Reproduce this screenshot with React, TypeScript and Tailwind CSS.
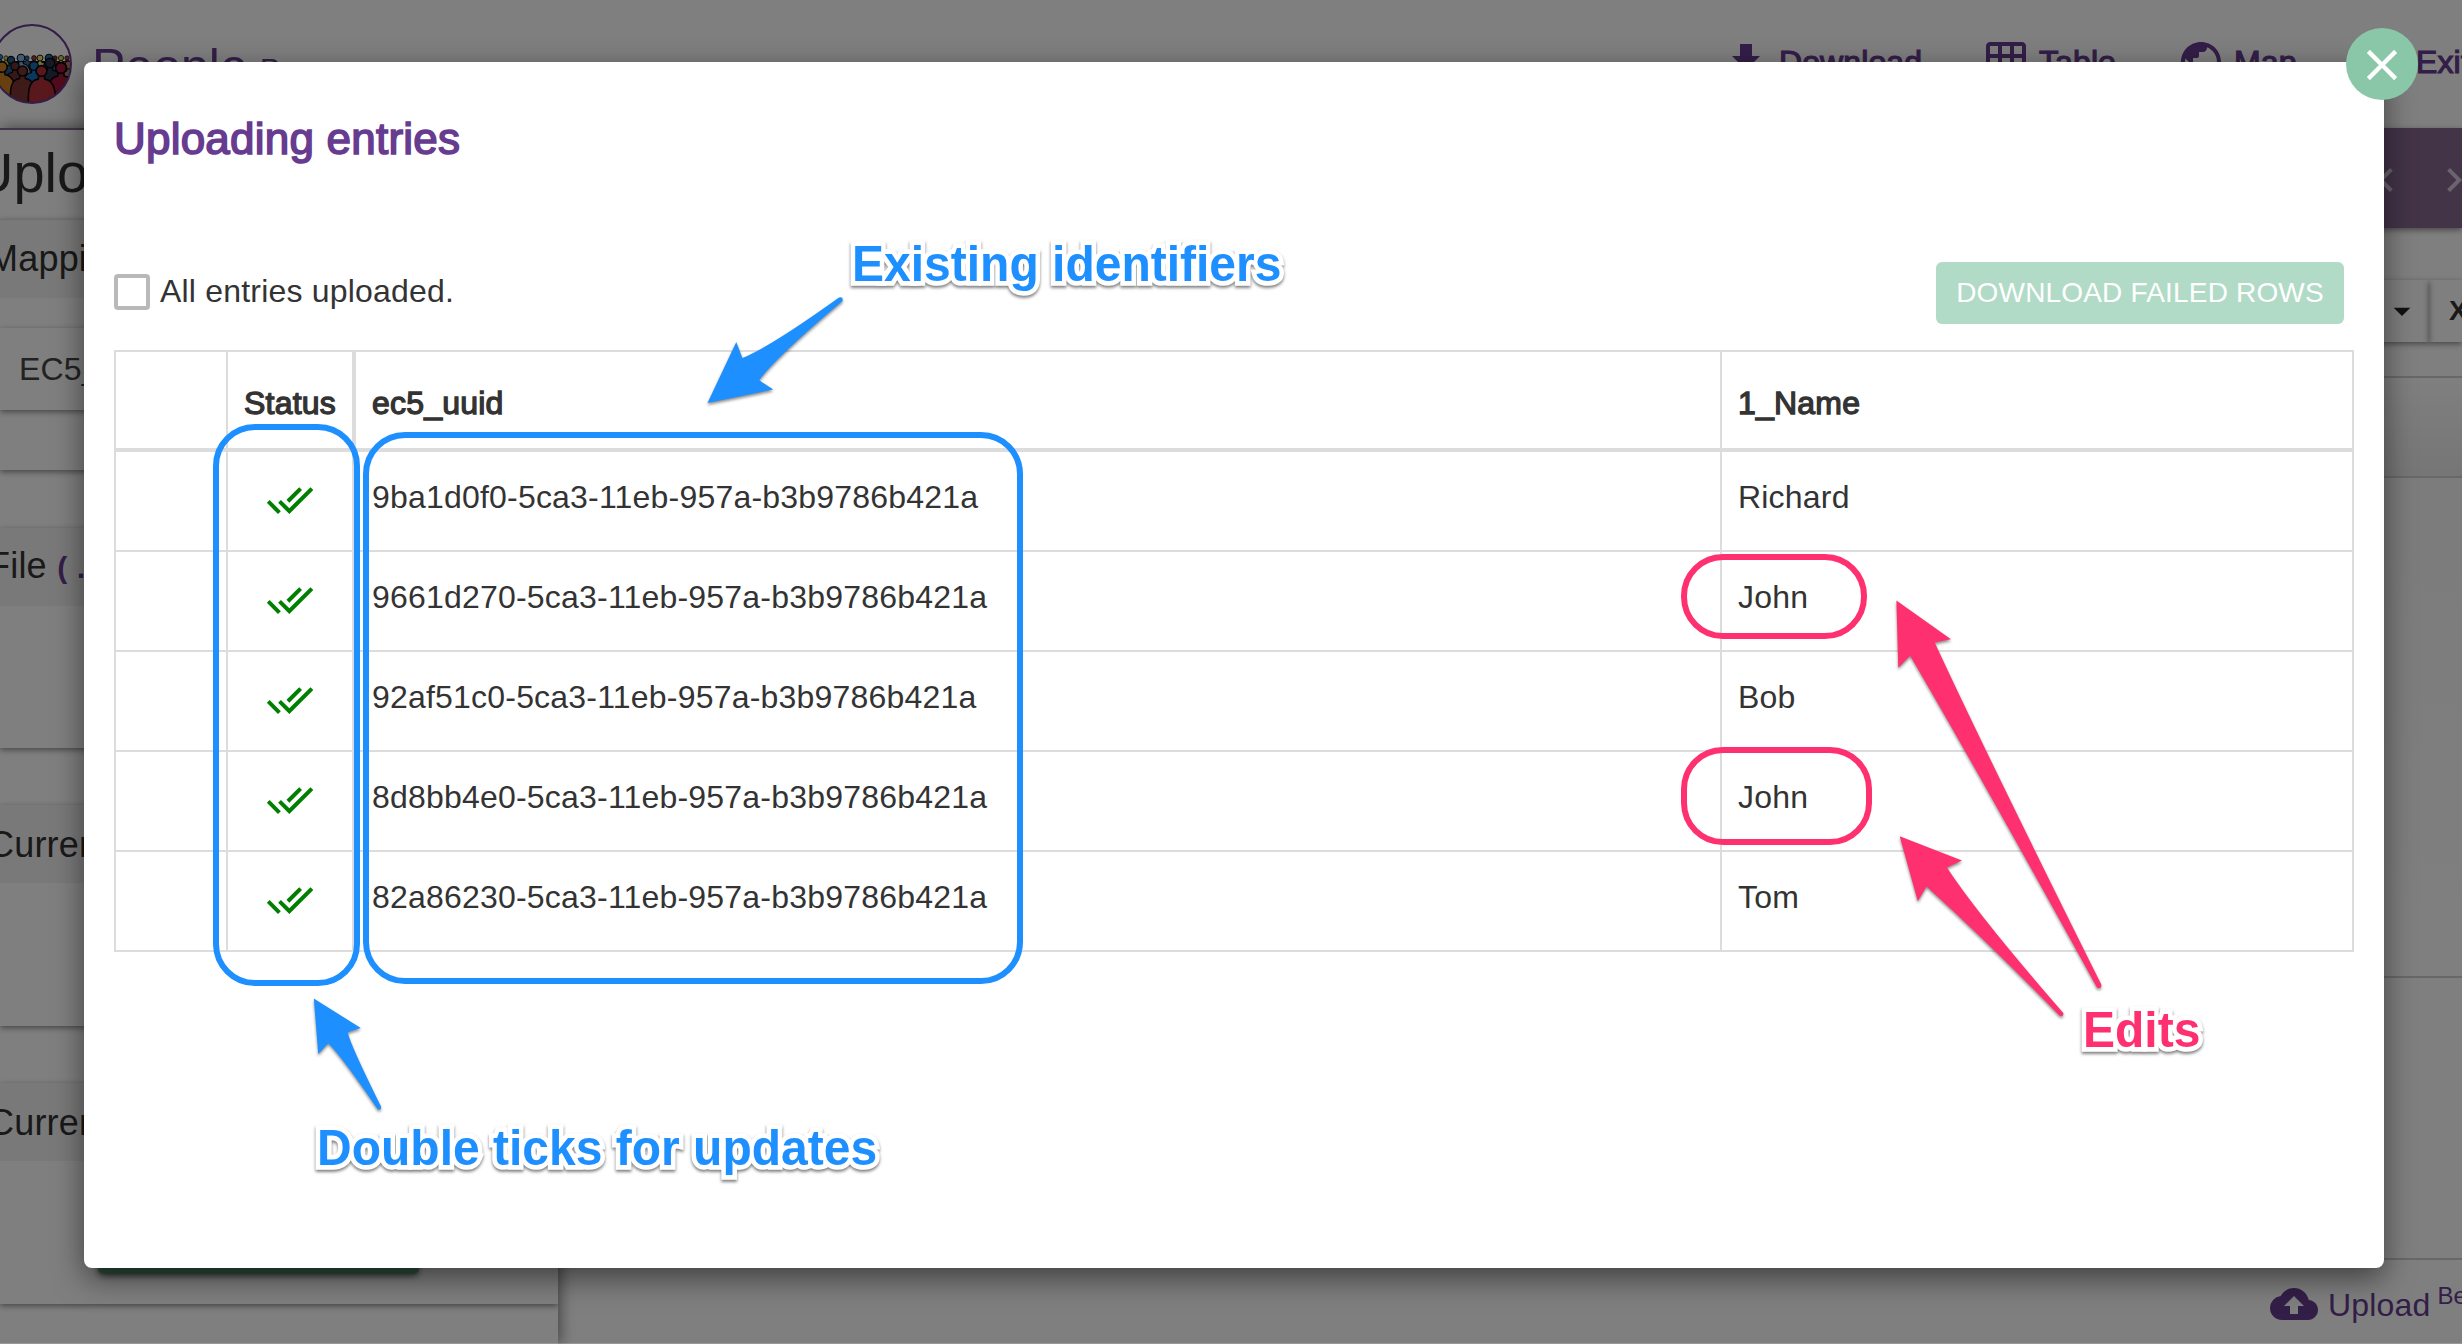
import React from "react";
import {
  MdArrowDropDown,
  MdChevronLeft,
  MdChevronRight,
  MdClose,
  MdCloudUpload,
  MdDoneAll,
  MdGridOn,
  MdPublic,
} from "react-icons/md";

const rows = [
  { uuid: "9ba1d0f0-5ca3-11eb-957a-b3b9786b421a", name: "Richard" },
  { uuid: "9661d270-5ca3-11eb-957a-b3b9786b421a", name: "John" },
  { uuid: "92af51c0-5ca3-11eb-957a-b3b9786b421a", name: "Bob" },
  { uuid: "8d8bb4e0-5ca3-11eb-957a-b3b9786b421a", name: "John" },
  { uuid: "82a86230-5ca3-11eb-957a-b3b9786b421a", name: "Tom" },
];

function Person({ x, y, r, fill }: { x: number; y: number; r: number; fill: string }) {
  return (
    <g transform={`translate(${x} ${y}) scale(${r / 5})`} fill={fill} stroke="#0a0608" strokeWidth="1.5">
      <path d="M-12 34 C-13 16 -11 8.5 -3 7.5 L-2.5 4 H2.5 L3 7.5 C11 8.5 13 16 14 34 Z" />
      <circle cx="0" cy="0" r="5" />
    </g>
  );
}

function Logo() {
  return (
    <svg className="-ml-2 size-20 shrink-0" viewBox="-8 24 80 80">
      <defs>
        <clipPath id="disc">
          <circle cx="32" cy="64" r="38.5" />
        </clipPath>
      </defs>
      <circle cx="32" cy="64" r="39" fill="#999999" />
      <g clipPath="url(#disc)">
        <rect x="-8" y="24" width="80" height="80" fill="#ffffff" />
        <rect x="-8" y="61" width="80" height="44" fill="#10141c" />
        <Person x={0} y={57} r={2.6} fill="#2a8fd0" />
        <Person x={6} y={58} r={2.2} fill="#c9d24a" />
        <Person x={27} y={58} r={2.2} fill="#3a6fa0" />
        <Person x={34} y={58} r={2.4} fill="#b03a3a" />
        <Person x={55} y={58} r={2.2} fill="#8a3030" />
        <Person x={61} y={58} r={2.6} fill="#d8dc50" />
        <Person x={67} y={58} r={2.2} fill="#b03a4a" />
        <Person x={40} y={58} r={3} fill="#e0e070" />
        <Person x={21} y={58} r={3.8} fill="#7fb8e8" />
        <Person x={11} y={60} r={3.6} fill="#205c90" />
        <Person x={49} y={58} r={3.8} fill="#1d6fa8" />
        <Person x={69} y={65} r={4} fill="#a08060" />
        <Person x={15} y={66} r={4.2} fill="#6b3030" />
        <Person x={34} y={66} r={4.4} fill="#1470b8" />
        <Person x={50} y={63} r={4.8} fill="#2b3450" />
        <Person x={2} y={67} r={5.2} fill="#d08020" />
        <Person x={61} y={68} r={5.4} fill="#a01838" />
        <Person x={22.5} y={71} r={5} fill="#7c3430" />
        <Person x={41.5} y={71} r={5.4} fill="#b03038" />
      </g>
      <circle cx="32" cy="64" r="39" fill="none" stroke="#673c90" strokeWidth="2" />
    </svg>
  );
}

function DownloadIcon() {
  return (
    <svg viewBox="0 0 24 24" className="size-12" fill="currentColor">
      <path d="M19 9h-4V3H9v6H5l7 7 7-7zM5 18v2h14v-2H5z" />
    </svg>
  );
}

function NavItem({ icon, label, className }: { icon: React.ReactNode; label: string; className: string }) {
  return (
    <div className={`flex h-12 shrink-0 items-center ${className}`}>
      {icon}
      <span className="ml-[9px] text-[32px] leading-none tracking-[0.1px] [-webkit-text-stroke:1.2px_currentColor]">{label}</span>
    </div>
  );
}

function Panel({ title, className, children }: { title: React.ReactNode; className: string; children?: React.ReactNode }) {
  return (
    <section className={`shrink-0 bg-white shadow-[0_2px_6px_rgba(0,0,0,0.45)] ${className}`}>
      <h3 className="flex h-[78px] shrink-0 items-center bg-[#f3f3f3] text-[36px] leading-none tracking-[0.2px] text-[#333]">
        {title}
      </h3>
      {children}
    </section>
  );
}

function Backdrop() {
  return (
    <div className="flex h-[1344px] w-[2462px] flex-col overflow-hidden bg-white">
      <header className="flex h-32 shrink-0 items-start whitespace-nowrap text-[#673c90]">
        <div className="mt-6 flex w-[1722px] shrink-0 items-start">
          <Logo />
          <span className="mt-[15px] ml-[20px] text-[50px] leading-[56px]">People</span>
          <span className="mt-[26px] ml-[12px] text-[32px] leading-[40px]">By</span>
        </div>
        <div className="mt-[38px] flex shrink-0">
          <NavItem icon={<DownloadIcon />} label="Download" className="w-[260px]" />
          <NavItem icon={<MdGridOn className="size-12" />} label="Table" className="w-[195px]" />
          <NavItem icon={<MdPublic className="size-12" />} label="Map" className="w-[182px]" />
          <NavItem icon={<MdClose className="size-12" />} label="Exit" className="w-[120px]" />
        </div>
      </header>

      <div className="flex min-h-0 flex-1">
        <aside className="z-10 flex w-[558px] shrink-0 flex-col overflow-hidden whitespace-nowrap border-t-2 border-[#866890] bg-white shadow-[2px_0_14px_rgba(0,0,0,0.5)]">
          <h2 className="-ml-[27px] h-[89px] shrink-0 pt-[11px] text-[56px] leading-[64px] text-[#333]">Upload</h2>
          <Panel title={<span className="-ml-[12px]">Mapping</span>} className="h-[251px] border-t border-[#ddd]">
            <div className="mt-[30px] mr-6 flex h-[82px] items-center pl-[19px] text-[32px] tracking-[0.2px] text-[#444] shadow-[0_2px_6px_rgba(0,0,0,0.45)]">
              EC5_AUTO
            </div>
          </Panel>
          <Panel
            title={
              <span className="-ml-[12px] pb-0.5">
                File<span className="ml-[7px] font-['Liberation_Mono'] text-[30px] font-bold text-[#673c90]">(.csv)</span>
              </span>
            }
            className="mt-[58px] h-[220px]"
          />
          <Panel title={<span className="-ml-[12px] pt-px">Current branch</span>} className="mt-[57px] h-[221px]" />
          <Panel title={<span className="-ml-[12px] pt-px">Current entry</span>} className="mt-[57px] flex h-[221px] flex-col">
            <div className="mt-auto mb-[30px] ml-[98px] h-[64px] w-[321px] shrink-0 rounded-md bg-[#589878] shadow-[0_2px_6px_rgba(0,0,0,0.6)]" />
          </Panel>
        </aside>

        <main className="flex min-w-0 flex-1 flex-col">
          <div className="flex h-[100px] shrink-0 items-center justify-end bg-[#866890] text-[#d6c8dc] shadow-[0_2px_6px_rgba(0,0,0,0.45)]">
            <MdChevronLeft className="mt-1 mr-5 size-12" />
            <MdChevronRight className="-mr-4 mt-1 size-12" />
          </div>
          <div className="mt-[52px] flex h-[62px] shrink-0 justify-end">
            <div className="flex w-[160px] items-center justify-end shadow-[0_2px_6px_rgba(0,0,0,0.45)]">
              <MdArrowDropDown className="mr-[7px] size-10 text-[#222]" />
            </div>
            <div className="flex w-[33px] items-center overflow-hidden pl-5 text-[28px] font-bold text-[#333] shadow-[0_2px_6px_rgba(0,0,0,0.45)]">
              X
            </div>
          </div>
          <div className="mt-[34px] h-[102px] shrink-0 border-y-2 border-[#d0d0d0] bg-linear-to-b from-white to-[#ececec]" />
          <div className="h-[500px] shrink-0 border-b-2 border-[#d0d0d0] bg-linear-to-b from-[#f8f8f8] to-white" />
          <div className="h-[282px] shrink-0 border-b-2 border-[#d0d0d0]" />
          <footer className="flex flex-1 items-start pt-5 pl-[1712px] whitespace-nowrap text-[#673c90]">
            <MdCloudUpload className="size-12 shrink-0" />
            <span className="ml-[10px] shrink-0 pt-[5px] text-[32px] leading-[40px] tracking-[0.2px]">Upload</span>
            <span className="ml-[7px] shrink-0 text-[24px] leading-[32px]">Beta</span>
          </footer>
        </main>
      </div>
    </div>
  );
}

const cell = "flex items-center border-r-2 border-[#dcdcdc]";

function EntriesTable() {
  return (
    <div className="mx-[30px] mt-[26px] border-t-2 border-l-2 border-[#dcdcdc] text-[32px] leading-none tracking-[0.2px] text-[#333]">
      <div className="grid h-[100px] grid-cols-[112px_128px_1366px_632px] border-b-4 border-[#dcdcdc] [-webkit-text-stroke:1.3px_currentColor]">
        <div className={cell} />
        <div className="flex items-center border-r-4 border-[#dcdcdc] pt-1.5 pl-4">Status</div>
        <div className={`${cell} pt-1.5 pl-4`}>ec5_uuid</div>
        <div className={`${cell} pt-1.5 pl-4`}>1_Name</div>
      </div>
      {rows.map((row) => (
        <div key={row.uuid} className="grid h-[100px] grid-cols-[112px_128px_1366px_632px] border-b-2 border-[#dcdcdc]">
          <div className={cell} />
          <div className="flex items-center justify-center border-r-4 border-[#dcdcdc] pb-0.5 text-[#008000]">
            <MdDoneAll className="size-12" />
          </div>
          <div className={`${cell} pb-2 pl-4`}>{row.uuid}</div>
          <div className={`${cell} pb-2 pl-4`}>{row.name}</div>
        </div>
      ))}
    </div>
  );
}

function Dialog() {
  return (
    <div className="absolute top-[62px] left-[84px] flex h-[1206px] w-[2300px] flex-col rounded-lg bg-white shadow-[0_10px_30px_rgba(0,0,0,0.5)]">
      <h1 className="mt-[49px] ml-[30px] text-[44px] leading-[56px] tracking-[0.22px] text-[#673c90] [-webkit-text-stroke:1.6px_currentColor]">
        Uploading entries
      </h1>
      <div className="mt-[95px] mr-10 ml-[30px] flex h-[62px] items-start">
        <span className="mt-3 size-9 rounded border-4 border-[#b9b9b9]" />
        <span className="mt-[9px] ml-[10px] text-[32px] leading-[40px] tracking-[0.2px] text-[#333]">
          All entries uploaded.
        </span>
        <button className="ml-auto h-[62px] w-[408px] rounded-md bg-[#b1dbc6] text-[28px] tracking-[0.18px] text-white">
          DOWNLOAD FAILED ROWS
        </button>
      </div>
      <EntriesTable />
      <button className="absolute -top-[34px] -right-[34px] flex size-[72px] items-center justify-center rounded-full bg-[#89c7a8] pt-0.5 text-white">
        <MdClose className="size-[52px]" />
      </button>
    </div>
  );
}

const label =
  "absolute origin-[0_44px] scale-y-105 whitespace-nowrap text-[48px] leading-[56px] font-bold [-webkit-text-stroke:9px_white] [paint-order:stroke_fill] drop-shadow-[0_2px_1.5px_rgba(0,0,0,0.5)]";

function Annotations() {
  return (
    <div className="pointer-events-none absolute inset-0">
      <div className="absolute top-[424px] left-[213px] h-[562px] w-[147px] rounded-[42px] border-[6px] border-[#1e8fff]" />
      <div className="absolute top-[432px] left-[363px] h-[552px] w-[660px] rounded-[42px] border-[6px] border-[#1e8fff]" />
      <div className="absolute top-[554px] left-[1681px] h-[85px] w-[186px] rounded-[42px] border-[6px] border-[#ff3070]" />
      <div className="absolute top-[747px] left-[1681px] h-[98px] w-[191px] rounded-[42px] border-[6px] border-[#ff3070]" />
      <svg
        className="absolute inset-0 h-[1344px] w-[2462px] drop-shadow-[0_2px_1.5px_rgba(0,0,0,0.45)]"
        viewBox="0 0 2462 1344"
      >
        <g fill="#1e8fff">
          <path d="M707.5 403 L736.3 342 L742.4 358 Q770 347 839 297.5 Q843.5 296 842.5 301 Q775 358 759.2 380.3 L773.3 389.6 Z" />
          <path d="M313.8 998.5 L360.8 1028 L347.7 1032.3 Q350 1044 381 1106.5 Q381.5 1111 377.5 1109 Q342 1057 328.3 1043.3 L318.3 1054 Z" />
        </g>
        <g fill="#ff3070">
          <path d="M1896.4 600.5 L1951 639.3 L1934.7 642.5 Q1982 745 2101.3 984.5 Q2101.5 989.5 2097 987.5 Q1980 775 1910.2 655.7 L1898.3 667.7 Z" />
          <path d="M1899.7 836.2 L1962 860.4 L1946.9 867.5 Q1978 915 2063.3 1013 Q2064 1017.5 2059.5 1015.5 Q1990 944 1926.6 886.4 L1917.8 901.3 Z" />
        </g>
      </svg>
      <span className={`${label} top-[237px] left-[852px] text-[#1e8fff]`}>Existing identifiers</span>
      <span className={`${label} top-[1121px] left-[317px] text-[#1e8fff]`}>Double ticks for updates</span>
      <span className={`${label} top-[1003px] left-[2083px] text-[#ff3070]`}>Edits</span>
    </div>
  );
}

export default function App() {
  return (
    <div className="relative h-[1344px] w-[2462px] overflow-hidden font-['Liberation_Sans',sans-serif]">
      <Backdrop />
      <div className="absolute inset-0 z-20 border-b border-white/20 bg-black/50" />
      <div className="absolute inset-0 z-30">
        <Dialog />
        <Annotations />
      </div>
    </div>
  );
}
